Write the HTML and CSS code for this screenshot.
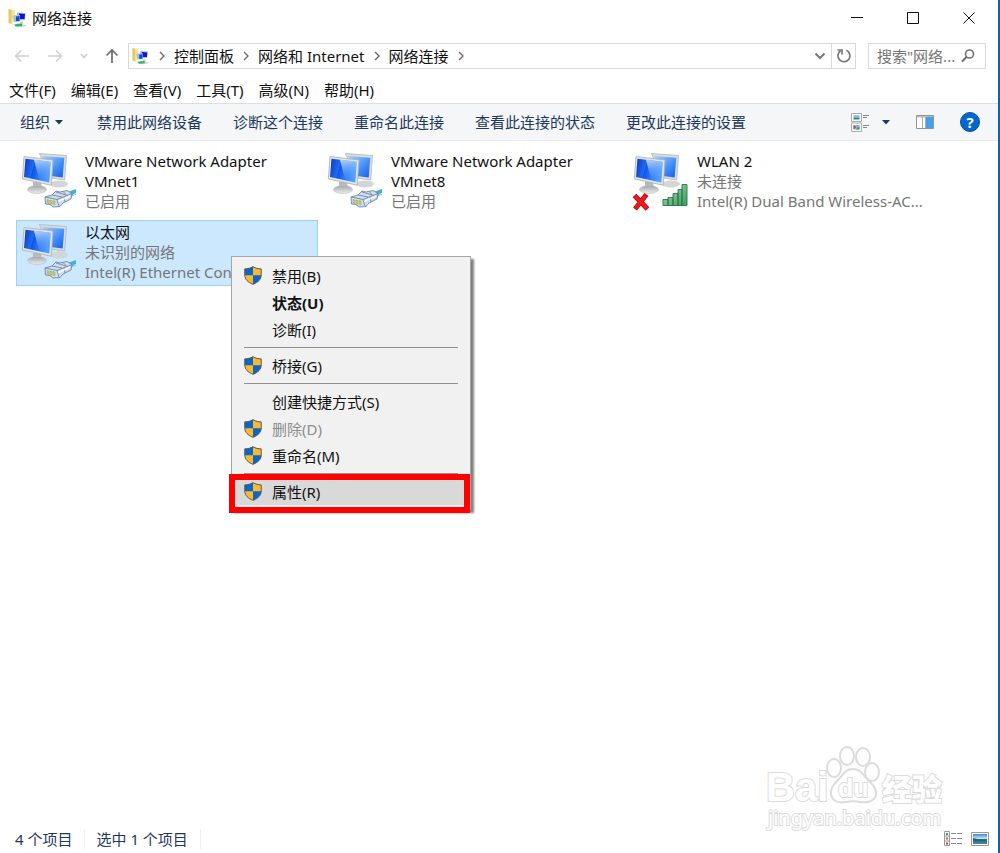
FILE: index.html
```html
<!DOCTYPE html>
<html lang="zh-CN">
<head>
<meta charset="utf-8">
<title>网络连接</title>
<link rel="stylesheet" href="styles.css">
</head>
<body>
<svg class="defs" aria-hidden="true">
  <defs>
    <linearGradient id="g-screen" x1="0" y1="0" x2="1" y2="0.25">
      <stop offset="0" stop-color="#0a35c4"/><stop offset=".4" stop-color="#1f6df0"/><stop offset=".42" stop-color="#0d55ea"/><stop offset="1" stop-color="#4f9cff"/>
    </linearGradient>
    <linearGradient id="g-back" x1="0" y1="0" x2="1" y2="1">
      <stop offset="0" stop-color="#a9d2fb"/><stop offset=".6" stop-color="#3f8ef8"/><stop offset="1" stop-color="#1c5ce0"/>
    </linearGradient>
    <linearGradient id="g-shine" x1="0" y1="0" x2="0.3" y2="1">
      <stop offset="0" stop-color="#e4f3ff" stop-opacity=".85"/><stop offset="1" stop-color="#6fb1ff" stop-opacity=".1"/>
    </linearGradient>
    <linearGradient id="g-stand" x1="0" y1="0" x2="0" y2="1">
      <stop offset="0" stop-color="#9fa5a8"/><stop offset="1" stop-color="#eceeee"/>
    </linearGradient>
    <linearGradient id="g-bar" x1="0" y1="0" x2="1" y2="1">
      <stop offset="0" stop-color="#a8e0b4"/><stop offset="1" stop-color="#3c9a60"/>
    </linearGradient>
    <linearGradient id="g-pic" x1="0" y1="0" x2="0" y2="1">
      <stop offset="0" stop-color="#3d86dc"/><stop offset=".45" stop-color="#c4e4fb"/><stop offset=".55" stop-color="#35705e"/><stop offset="1" stop-color="#3b88c8"/>
    </linearGradient>
    <symbol id="monitors" viewBox="0 0 56 58">
      <ellipse cx="39" cy="33" rx="9" ry="3.5" fill="#d3d6d7"/>
      <path d="M19.300 2.500 46.500 4.500 44.700 29 31 27Z" fill="#d9dcda" stroke="#b1b6b6" stroke-width=".8"/>
      <path d="M22 5 44.300 6.700 42.700 26.500 31 25Z" fill="url(#g-back)"/>
      <path d="M13 31h8l1 7h-9Z" fill="#b5babc"/>
      <ellipse cx="17" cy="38.500" rx="9.500" ry="4" fill="url(#g-stand)" stroke="#bfc4c5" stroke-width=".7"/>
      <path d="M4 5.500 33 9 31.300 34.200 2.300 28Z" fill="#e2e4e2" stroke="#a9afb0" stroke-width=".8"/>
      <path d="M5.500 7.700 30.700 10.700 29.300 31.500 4 26Z" fill="url(#g-screen)"/>
      <path d="M14 8.800 30.700 10.700 29.700 26 19 28.500Z" fill="url(#g-shine)"/>
    </symbol>
    <symbol id="plug" viewBox="0 0 56 58">
      <path d="M45 42 56 38 57 41 49 46Z" fill="#3db4d8"/>
      <path d="M51 45 57 43" stroke="#7fcbe0" fill="none"/>
      <path d="M25 46 32 44 36 40 40 41 47 39.500 52 42.500 51 48 43 52 40 55.500 33 56 30 53.500 25.500 53Z" fill="#d3deec" stroke="#6a86ad" stroke-width=".9"/>
      <path d="M25.500 46 37 48.500 52 42.500M37 48.500 39 55M36 41 46 44M32 44 42 46M43 40.500l5 5M44 46l1 5" fill="none" stroke="#5f7ba3" stroke-width=".8"/>
      <path d="M27 48.500l2 .5v3.500l-2-.5ZM30 49l2 .5v4l-2-1ZM33 49.500l2 .5v4l-2-1Z" fill="#d3cc62" stroke="#8c965d" stroke-width=".4"/>
      <path d="M38 50.500 50 45" stroke="#f8fbff" stroke-width="1.500"/>
    </symbol>
    <symbol id="shield" viewBox="0 0 18 19">
      <path d="M9 .5C6.500 2.200 3.500 2.800.7 2.800v6C.7 13.500 4 16.500 9 18.500c5-2 8.300-5 8.300-9.700v-6C14.500 2.800 11.500 2.200 9 .5Z" fill="#fdb92e"/>
      <path d="M9 .5C6.500 2.200 3.500 2.800.7 2.800V9.300H9ZM9 9.300h8.300C17 13.500 13.500 16.700 9 18.500Z" fill="#0b66c8"/>
      <path d="M9 .7C6.500 2.300 3.500 2.900.8 2.900v6C.8 13.500 4 16.300 9 18.300c5-2 8.200-4.800 8.200-9.400v-6C14.500 2.900 11.500 2.300 9 .7Z" fill="none" stroke="#555b60"/>
    </symbol>
    <symbol id="netfolder" viewBox="0 0 20 20">
      <path d="M.5 1 4 2v14L.5 15Z" fill="#e8c763"/>
      <path d="M2 1l5 1.500v10L3.500 16V3Z" fill="#f8e396"/>
      <path d="M9 4.500 17.500 5l-.5 7-8 .5Z" fill="#a3bdd8"/>
      <path d="M11 5.500 17 6l-.5 5H11Z" fill="#0d16c8"/>
      <path d="M5 7.500 12 7v6.500L6 14Z" fill="#8fc5ed"/>
      <path d="M8 8.500 11.500 8v5L8 13Z" fill="#1747cf"/>
      <path d="M9 15.500h3v-2h3v3l4 1-5 1.500-7-.5Z" fill="#c6d3d4"/>
      <path d="M6 16.500 14 15.500v2.500l-6 .5Z" fill="#25bb55"/>
    </symbol>
    <symbol id="chev" viewBox="0 0 6 10"><path d="M1 1l4 4-4 4" fill="none" stroke="#6b6b6b" stroke-width="1.400"/></symbol>
  </defs>
</svg>

<div class="window">
  <header class="titlebar">
    <svg class="app-icon"><use href="#netfolder"/></svg>
    <h1 class="title">网络连接</h1>
    <div class="controls">
      <button class="control" aria-label="最小化"><svg width="14" height="14"><path d="M1 6.500h12" stroke="#111"/></svg></button>
      <button class="control" aria-label="最大化"><svg width="14" height="14"><path d="M1.500 1.500h11v11h-11Z" stroke="#111" fill="none"/></svg></button>
      <button class="control" aria-label="关闭"><svg width="14" height="14"><path d="M1.500 1.500l11 11m0-11l-11 11" stroke="#111"/></svg></button>
    </div>
  </header>

  <div class="navbar">
    <div class="nav-buttons">
      <button class="nav" aria-label="后退" disabled><svg width="16" height="14"><path d="M15 7H1.500M7 1.500 1.500 7 7 12.500" fill="none" stroke="#d0d0d0" stroke-width="1.400"/></svg></button>
      <button class="nav" aria-label="前进" disabled><svg width="16" height="14"><path d="M1 7h13.500M9 1.500 14.500 7 9 12.500" fill="none" stroke="#d0d0d0" stroke-width="1.400"/></svg></button>
      <button class="nav" aria-label="最近" disabled><svg width="8" height="6"><path d="M1 1l3 3.500L7 1" fill="none" stroke="#c8c8c8" stroke-width="1.400"/></svg></button>
      <button class="nav" aria-label="向上"><svg width="14" height="16"><path d="M7 15V2M1.500 7.500 7 2l5.500 5.500" fill="none" stroke="#6b6b6b" stroke-width="1.700"/></svg></button>
    </div>
    <nav class="address" aria-label="地址">
      <svg class="addr-icon"><use href="#netfolder"/></svg>
      <svg class="chev"><use href="#chev"/></svg>
      <a class="crumb" href="#">控制面板</a>
      <svg class="chev"><use href="#chev"/></svg>
      <a class="crumb" href="#">网络和 Internet</a>
      <svg class="chev"><use href="#chev"/></svg>
      <a class="crumb" href="#">网络连接</a>
      <svg class="chev"><use href="#chev"/></svg>
      <button class="drop" aria-label="历史"><svg width="12" height="8"><path d="M1.500 1.500 6 6l4.500-4.500" fill="none" stroke="#777" stroke-width="2"/></svg></button>
      <button class="refresh" aria-label="刷新"><svg width="16" height="16"><path d="M10.500 2.300A6 6 0 1 1 4.500 2.800" fill="none" stroke="#777" stroke-width="1.700"/><path d="M1.500 2h4.500v4.500" fill="none" stroke="#777" stroke-width="1.700"/></svg></button>
    </nav>
    <div class="search">
      <input class="search-input" type="text" aria-label="搜索" placeholder="搜索&quot;网络...">
      <svg width="14" height="14"><circle cx="8.500" cy="5" r="4" fill="none" stroke="#707070" stroke-width="1.600"/><path d="M5.500 8 1 12.500" stroke="#707070" stroke-width="2"/></svg>
    </div>
  </div>

  <div class="menubar">
    <button class="menu-top">文件(F)</button>
    <button class="menu-top">编辑(E)</button>
    <button class="menu-top">查看(V)</button>
    <button class="menu-top">工具(T)</button>
    <button class="menu-top">高级(N)</button>
    <button class="menu-top">帮助(H)</button>
  </div>

  <div class="toolbar">
    <button class="tool tool-drop">组织<svg class="caret" width="8" height="5"><path d="M0 0h8L4 4.500Z" fill="#1e395b"/></svg></button>
    <button class="tool">禁用此网络设备</button>
    <button class="tool">诊断这个连接</button>
    <button class="tool">重命名此连接</button>
    <button class="tool">查看此连接的状态</button>
    <button class="tool">更改此连接的设置</button>
    <div class="tool-icons">
      <button class="icon-btn view-btn" aria-label="更改视图">
        <svg width="18" height="19"><path d="M.5.500h10v8H.5ZM.5 10h10v8.500H.5Z" fill="#fff" stroke="#aaa"/><path d="M2.500 2.500h6v4h-6Z" fill="url(#g-pic)"/><path d="M2.500 12h6v4.500h-6Z" fill="#83b8de"/><path d="M2.500 12l3 2-3 2.500Z" fill="#cf5036"/><path d="M5 16.500l3.500-3.500v3.500Z" fill="#2fa544"/><path d="M12 2.500h6M12 4.500h4M12 12.500h6M12 14.500h4" stroke="#888"/></svg>
        <svg class="caret" width="8" height="5"><path d="M0 0h8L4 4.500Z" fill="#1e395b"/></svg>
      </button>
      <button class="icon-btn" aria-label="预览窗格"><svg width="18" height="14"><path d="M.5.500h17v13H.5Z" fill="#fff" stroke="#8f9499"/><path d="M1 1h16v1.500H1Z" fill="#b9bcc0"/><path d="M10 2h7v11h-7Z" fill="#42a0e8"/><path d="M6.500 2v11M9.500 2v11" stroke="#a9adb2"/></svg></button>
      <button class="help" aria-label="帮助">?</button>
    </div>
  </div>

  <main class="content">
    <ul class="items">
      <li class="item"><svg class="item-icon"><use href="#monitors"/><use href="#plug"/></svg>
        <div class="item-text"><span class="name">VMware Network Adapter VMnet1</span><span class="info">已启用</span></div></li>
      <li class="item"><svg class="item-icon"><use href="#monitors"/><use href="#plug"/></svg>
        <div class="item-text"><span class="name">VMware Network Adapter VMnet8</span><span class="info">已启用</span></div></li>
      <li class="item"><svg class="item-icon" viewBox="0 0 56 58"><use href="#monitors"/>
          <path d="M31 48.500h5v6h-5ZM36 46.500h5v8h-5ZM41 42.500h5v12h-5ZM46 38.500h4v16h-4ZM50 33.500h5v21h-5Z" fill="url(#g-bar)" stroke="#2a7547" stroke-width=".9"/>
          <path d="M2.500 44.500 15.500 58M14.500 43.500 3 58" stroke="#a80f12" stroke-width="5"/><path d="M3 45 15 57.500M14 44 3.500 57.500" stroke="#f0171c" stroke-width="3.400"/></svg>
        <div class="item-text"><span class="name">WLAN 2</span><span class="info">未连接</span><span class="info">Intel(R) Dual Band Wireless-AC...</span></div></li>
      <li class="item selected"><svg class="item-icon"><use href="#monitors"/><use href="#plug"/></svg>
        <div class="item-text"><span class="name">以太网</span><span class="info">未识别的网络</span><span class="info">Intel(R) Ethernet Connection</span></div>
      </li>
    </ul>
  </main>

  <footer class="statusbar">
    <span class="status">4 个项目</span>
    <span class="status">选中 1 个项目</span>
    <div class="views">
      <button class="icon-btn" aria-label="详细信息"><svg width="18" height="15"><path d="M.5.500h5v14h-5ZM.5 5h5M.5 10h5" fill="#fff" stroke="#999"/><path d="M2 2h2v2H2Z" fill="#3a92a4"/><path d="M2 6.500h2v2H2Z" fill="#807a45"/><path d="M2 11.500h2v2H2Z" fill="#d23b31"/><path d="M7 2.500h5m1 0h5M7 7.500h5m1 0h5M7 12.500h5m1 0h5" stroke="#8a8a8a"/></svg></button>
      <button class="icon-btn" aria-label="大图标"><svg width="18" height="14"><path d="M.5.500h17v13H.5Z" fill="#fff" stroke="#999"/><path d="M2 2h14v10H2Z" fill="url(#g-pic)"/><path d="M2 6l7 1.500L16 9v.5L2 9Z" fill="#2d6558"/></svg></button>
    </div>
  </footer>

  <svg class="watermark" viewBox="0 0 190 90" width="190" height="90">
    <g fill="#fff" stroke="#dcdcdc" stroke-width="2">
      <text class="wm-main" x="3" y="58">Bai</text>
      <ellipse cx="71" cy="25" rx="7" ry="9"/><ellipse cx="84" cy="13" rx="7" ry="9"/><ellipse cx="100" cy="14" rx="7" ry="9"/><ellipse cx="109" cy="29" rx="7" ry="9"/>
      <path d="M90 26c-8 0-10 6-15 11s-8 9-7 15c2 7 9 8 15 7 5-1 9-1 14 0 6 1 14 0 16-7 1-6-3-10-8-15s-7-11-15-11Z"/>
      <text class="wm-du" x="75" y="54">du</text>
      <text class="wm-cn" x="119" y="57">经验</text>
      <text class="wm-url" x="5" y="82">jingyan.baidu.com</text>
    </g>
  </svg>

  <div class="context" role="menu">
    <button class="entry" role="menuitem"><svg class="shield"><use href="#shield"/></svg><span class="label">禁用(B)</span></button>
    <button class="entry entry-default" role="menuitem"><span class="label">状态(U)</span></button>
    <button class="entry" role="menuitem"><span class="label">诊断(I)</span></button>
    <hr class="rule">
    <button class="entry" role="menuitem"><svg class="shield"><use href="#shield"/></svg><span class="label">桥接(G)</span></button>
    <hr class="rule">
    <button class="entry" role="menuitem"><span class="label">创建快捷方式(S)</span></button>
    <button class="entry" role="menuitem" disabled><svg class="shield"><use href="#shield"/></svg><span class="label">删除(D)</span></button>
    <button class="entry" role="menuitem"><svg class="shield"><use href="#shield"/></svg><span class="label">重命名(M)</span></button>
    <hr class="rule">
    <button class="entry entry-hover" role="menuitem"><svg class="shield"><use href="#shield"/></svg><span class="label">属性(R)</span></button>
  </div>
</div>
</body>
</html>
```

FILE: styles.css
```css
* { box-sizing: border-box; }

body {
  margin: 0;
  font-family: "Noto Sans", "Noto Sans CJK SC", sans-serif;
  font-size: 15px;
  line-height: 20px;
  color: #111;
  background: #fff;
}

button {
  font: inherit;
  color: inherit;
  background: none;
  border: 0;
  padding: 0;
  white-space: nowrap;
}

svg { display: block; flex: none; }
.defs { position: absolute; width: 0; height: 0; }

.window {
  position: relative;
  display: flex;
  flex-direction: column;
  min-height: 100vh;
  border-right: 2px solid #0067b8;
}

/* Title bar */
.titlebar { display: flex; align-items: center; height: 35px; padding-left: 8px; gap: 4px; }
.app-icon { width: 20px; height: 20px; }
.title { margin: 0; font-size: 15px; font-weight: 400; }
.controls { display: flex; margin-left: auto; padding-right: 1px; }
.control { display: grid; place-items: center; width: 56px; height: 35px; }

/* Address row */
.navbar { display: flex; align-items: center; height: 42px; padding-right: 12px; }
.nav-buttons { display: flex; align-items: center; justify-content: space-between; width: 128px; padding: 0 9px 0 14px; }
.address {
  display: flex;
  align-items: center;
  flex: 1;
  min-width: 0;
  height: 26px;
  padding-left: 3px;
  border: 1px solid #d9d9d9;
}
.addr-icon { width: 18px; height: 18px; }
.chev { width: 6px; height: 10px; margin: 0 9px; }
.crumb { color: inherit; text-decoration: none; white-space: nowrap; }
.drop { display: grid; place-items: center; margin-left: auto; width: 22px; height: 24px; }
.refresh { display: grid; place-items: center; width: 24px; height: 24px; border-left: 1px solid #d9d9d9; }
.search {
  display: flex;
  align-items: center;
  width: 118px;
  height: 26px;
  margin-left: 12px;
  padding: 0 10px 0 8px;
  border: 1px solid #d9d9d9;
}
.search-input { flex: 1; min-width: 0; border: 0; padding: 0; font: inherit; background: none; outline: 0; }
.search-input::placeholder { color: #767676; opacity: 1; }

/* Menu bar */
.menubar { display: flex; align-items: center; gap: 15px; height: 26px; padding-left: 9px; }

/* Command bar */
.toolbar {
  display: flex;
  align-items: center;
  gap: 31px;
  height: 38px;
  padding: 0 18px 0 20px;
  color: #1e395b;
  background: #f4f6f8;
  border-top: 1px solid #dcdfe2;
  border-bottom: 1px solid #ebebeb;
}
.tool { display: flex; align-items: center; gap: 5px; }
.tool-drop { padding-right: 3px; }
.tool-icons { display: flex; align-items: center; gap: 26px; margin-left: auto; }
.view-btn { display: flex; align-items: center; gap: 13px; }
.help {
  width: 20px;
  height: 20px;
  border-radius: 50%;
  border: 1px solid #0a4f9d;
  background: #0068cc;
  color: #fff;
  font-weight: 700;
  line-height: 18px;
}

/* Connections */
.content { flex: 1; padding: 8px 0 0 16px; }
.items {
  display: grid;
  grid-template-columns: repeat(auto-fill, 302px);
  gap: 5px 4px;
  margin: 0;
  padding: 0;
  list-style: none;
}
.item { display: flex; gap: 9px; padding: 1px 3px 3px; border: 1px solid transparent; }
.selected { background: #cce8ff; border-color: #99d1ff; }
.item-icon { width: 56px; height: 58px; overflow: visible; }
.item-text { display: flex; flex-direction: column; min-width: 0; }
.info { color: #767676; white-space: nowrap; }

/* Context menu */
.context {
  position: absolute;
  left: 231px;
  top: 256px;
  width: 240px;
  padding: 5px 2px 4px;
  background: #f1f1f1;
  border: 1px solid #a5a5a5;
  box-shadow: 3px 3px 2px rgba(0, 0, 0, 0.5);
}
.entry {
  position: relative;
  display: grid;
  grid-template-columns: 20px 1fr;
  align-items: center;
  column-gap: 8px;
  width: 100%;
  height: 27px;
  padding-left: 10px;
  text-align: left;
}
.entry .label { grid-column: 2; }
.entry:disabled { color: #8d8d8d; }
.entry-default { font-weight: 700; }
.entry-hover { background: #d9d9d9; }
.entry-hover::after { content: ""; position: absolute; inset: -4px -2px -8px -5px; border: 6px solid #f00; }
.shield { width: 18px; height: 19px; }
.rule { height: 1px; margin: 4px 10px; border: 0; background: #919191; }

/* Status bar */
.statusbar { display: flex; align-items: center; height: 29px; padding: 0 9px 0 15px; color: #1e395b; }
.status { padding-right: 12px; margin-right: 11px; border-right: 1px solid #f0f0f0; }
.views { display: flex; align-items: center; gap: 9px; margin-left: auto; }

/* Corner mark */
.watermark { position: absolute; right: 45px; bottom: 20px; pointer-events: none; }
.watermark text { paint-order: stroke; }
.wm-main { font: 700 40px "Liberation Sans", sans-serif; }
.wm-du { font: 700 25px "Liberation Sans", sans-serif; }
.wm-cn { font: 900 30px "Noto Sans CJK SC", sans-serif; }
.wm-url { font: 400 20px "Noto Sans", sans-serif; }
```
